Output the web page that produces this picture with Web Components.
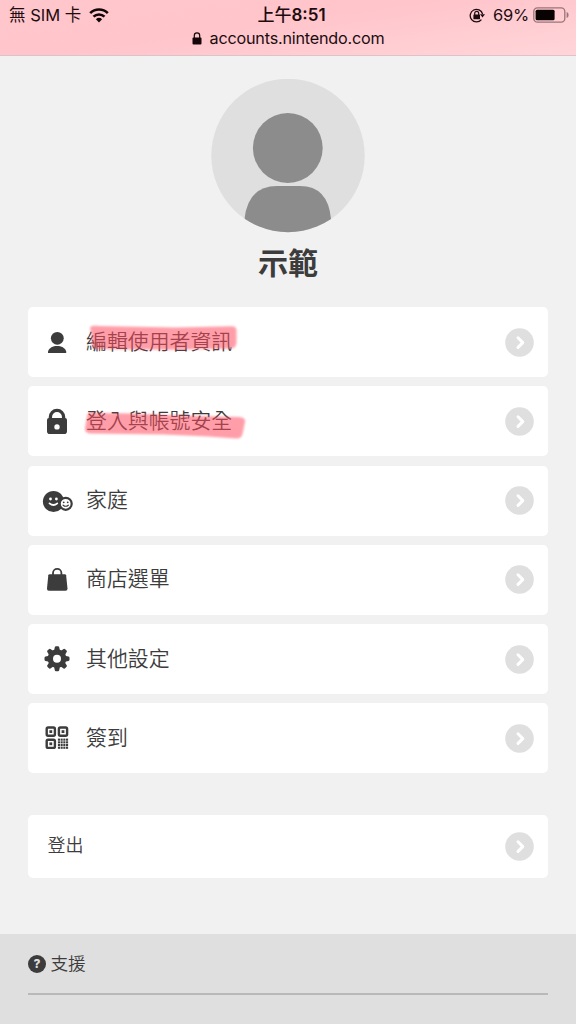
<!DOCTYPE html>
<html lang="zh-Hant">
<head>
<meta charset="utf-8">
<meta name="viewport" content="width=device-width">
<title>accounts.nintendo.com</title>
<style>
html,body{margin:0;height:100%;overflow:hidden;background:#f1f1f1}
body{font-family:Inter,"Noto Sans CJK TC",sans-serif;color:#3c3c3c}
</style>
</head>
<body>
<account-page></account-page>
<script>
function define(name, html, setup) {
  customElements.define(name, class extends HTMLElement {
    constructor() {
      super();
      const t = document.createElement('template');
      t.innerHTML = html;
      this.attachShadow({mode: 'open'}).append(t.content.cloneNode(true));
    }
    connectedCallback() { if (setup) setup(this, this.shadowRoot); }
  });
}

define('status-bar', `
<style>
:host{display:block;box-sizing:border-box;height:56px;padding-top:4px;color:#1c0c10;border-bottom:1px solid #dcc3c7;
 background:linear-gradient(172deg,#ffc6cb 0%,#ffc5cb 45%,#ffd5d9 100%)}
.row{display:grid;grid-template-columns:1fr auto 1fr;align-items:center;height:22px;padding:0 7px 0 9px;font-size:16.5px;line-height:22px}
.side{display:flex;align-items:center}
.right{justify-content:flex-end}
.time{font-weight:600;font-size:17px;margin-left:5px}
.time span{font-weight:500}
svg{display:block;flex:none}
.wifi{margin-left:8px}
.lockr{margin-right:8px}
.pct{letter-spacing:-.25px}
.bat{margin-left:4px}
.url{display:flex;justify-content:center;align-items:center;height:24px;font-size:16.2px;line-height:22px;letter-spacing:-.22px}
.url svg{margin-right:8px}
.url span{position:relative;top:-.5px}
</style>
<div class="row">
 <div class="side"><span>無 SIM 卡</span>
  <svg class="wifi" width="20" height="15" viewBox="0 0 20 15"><g fill="none" stroke="#100508" stroke-width="2.6"><path d="M1.2 5.2A12.4 12.4 0 0 1 18.8 5.2"/><path d="M4.5 8.7A7.8 7.8 0 0 1 15.5 8.7"/></g><path d="M6.9 11.2A4.5 4.5 0 0 1 13.1 11.2L10 14.4Z" fill="#100508"/></svg></div>
 <span class="time"><span>上午</span>8:51</span>
 <div class="side right">
  <svg class="lockr" width="16" height="15" viewBox="0 0 16 15"><path d="M12.4 11.6A6.3 6.3 0 1 1 13.6 6" fill="none" stroke="#1c0c10" stroke-width="1.3"/><path d="M11 6.2h5l-2.5 3.4z" fill="#1c0c10"/><rect x="4.4" y="6.5" width="6.6" height="4.8" rx=".6" fill="#1c0c10"/><path d="M5.7 7V5.4a2 2 0 0 1 4 0V7" fill="none" stroke="#1c0c10" stroke-width="1.2"/></svg>
  <span class="pct">69%</span>
  <svg class="bat" width="36" height="16" viewBox="0 0 36 16"><rect x=".8" y=".8" width="31" height="14.4" rx="3.6" fill="none" stroke="#9b747a" stroke-width="1.3"/><rect x="2.6" y="2.7" width="19" height="10.6" rx="1.5" fill="#080203"/><path d="M33.6 5q2 .7 2 3t-2 3z" fill="#9b747a"/></svg>
 </div>
</div>
<div class="url"><svg width="10" height="13" viewBox="0 0 10 13"><rect x=".5" y="5.5" width="9" height="7" rx="1" fill="#150609"/><path d="M2.3 6V3.6a2.7 2.7 0 0 1 5.4 0V6" fill="none" stroke="#150609" stroke-width="1.2"/></svg><span>accounts.nintendo.com</span></div>`);

define('user-profile', `
<style>
:host{display:flex;flex-direction:column;align-items:center;padding-top:23px;height:228px}
svg{display:block}
h1{margin:7.5px 0 0;font:700 30px/40px "Noto Sans CJK TC",sans-serif;color:#3c3c3c}
</style>
<svg width="154" height="154" viewBox="0 0 154 154"><defs><clipPath id="c"><circle cx="77" cy="76.5" r="76.7"/></clipPath></defs><circle cx="77" cy="76.5" r="76.7" fill="#dfdfdf"/><g clip-path="url(#c)" fill="#8c8c8c"><circle cx="76.8" cy="69" r="34.9"/><path d="M33.5 154V140Q37 107 66 107H89Q117 107 120 140V154Z"/></g></svg>
<h1><slot></slot></h1>`);

define('next-arrow', `
<style>:host{display:block;flex:none;width:29px;height:29px}svg{display:block}</style>
<svg width="29" height="29" viewBox="0 0 29 29"><circle cx="14.5" cy="14.5" r="14.3" fill="#dfdfdf"/><path d="M13 9.8l4.8 4.8-4.8 4.8" fill="none" stroke="#fff" stroke-width="3" stroke-linecap="round" stroke-linejoin="round"/></svg>`);

const dots = [0,1,2,3].map(r => [0,1,2,3].map(c =>
  `<rect x="${(16.9+c*2.7).toFixed(1)}" y="${(16.6+r*2.7).toFixed(1)}" width="2.1" height="2.1"/>`).join('')).join('');
const finder = (x, y) => `<rect x="${x+1.2}" y="${y+1.2}" width="8.2" height="8.2" rx="1.4" fill="none" stroke="#3c3c3c" stroke-width="2.4"/><rect x="${x+3.9}" y="${y+3.9}" width="2.8" height="2.8"/>`;
const teeth = [0,45,90,135,180,225,270,315].map(a =>
  `<path d="M13 8L13.8 4.2Q14 3.2 15 3.2H17Q18 3.2 18.2 4.2L19 8Z" transform="rotate(${a} 16 15.7)"/>`).join('');
const icons = {
  person: '<circle cx="16.3" cy="12.3" r="6.4"/><path d="M7 27V25.5C8 21.8 12 20 16.1 20S24.3 21.8 25.2 25.5V27Z"/>',
  lock: '<path d="M9.4 14V12a6.6 6.6 0 0 1 13.2 0V14" fill="none" stroke="#3c3c3c" stroke-width="3.3"/><path fill-rule="evenodd" d="M8 12.9H24Q26 12.9 26 14.9V26.2Q26 29 23.2 29H8.8Q6 29 6 26.2V14.9Q6 12.9 8 12.9ZM16 19.2a2.7 2.7 0 1 0 0 5.4a2.7 2.7 0 1 0 0-5.4Z"/>',
  family: '<circle cx="12.5" cy="16.5" r="10.6"/><g fill="#fff"><circle cx="9.5" cy="14" r="1.4"/><circle cx="15.4" cy="14" r="1.4"/></g><path d="M8.5 18.4Q12.4 21.7 16.3 18.4" fill="none" stroke="#fff" stroke-width="1.8" stroke-linecap="round"/><circle cx="24.7" cy="18.8" r="6" fill="#fff" stroke="#3c3c3c" stroke-width="2.2"/><circle cx="22.7" cy="17.3" r=".9"/><circle cx="26.7" cy="17.3" r=".9"/><path d="M22.1 20.2Q24.7 22.3 27.3 20.2" fill="none" stroke="#3c3c3c" stroke-width="1.2" stroke-linecap="round"/>',
  bag: '<path d="M12 11V9a4.2 4.2 0 0 1 8.4 0V11" fill="none" stroke="#3c3c3c" stroke-width="1.8"/><path d="M8.6 10.2H23.8Q24.9 10.2 25.1 11.3L26.5 24.6Q26.6 26.8 24.6 26.8H7.9Q5.8 26.8 6 24.6L7.3 11.3Q7.5 10.2 8.6 10.2Z"/>',
  gear: teeth + '<circle cx="16" cy="15.7" r="6.7" fill="none" stroke="#3c3c3c" stroke-width="5.4"/>',
  qr: finder(4.5, 4.3) + finder(16.7, 4.3) + finder(4.5, 16.5) + dots
};
/* Marker strokes that lie over a label, drawn relative to the card. */
const marks = {
  first: 'M62 21C63 18 67 19 72 19L147 20.6 203 19.2Q208.5 19 208.5 23L208.5 36Q208 41 203 41.6L140 42.8 72 42Q65 42 63.8 38L63.5 28Z',
  second: 'M59.5 28Q62 25 70 26.9L105 27.6 145 29.3 211 31Q218 31.5 217 36L214.6 47.5Q213.5 53 208 52.5L180 50.5 135 48.5 62 47.5Q56.5 47 57 42Z'
};

define('menu-card', `
<style>
:host{display:flex;align-items:center;position:relative;box-sizing:border-box;height:70px;padding:0 14px 0 13px;background:#fff;border-radius:5px}
:host([plain]){height:63.5px;padding-left:19.5px}
.icon{width:32px;height:32px;flex:none;fill:#3c3c3c}
.label{flex:1;margin-left:13px;font:350 20.9px/30px "Noto Sans CJK TC DemiLight","Noto Sans CJK TC",sans-serif;color:#3c3c3c;position:relative;top:-2.5px}
:host([plain]) .icon{display:none}
:host([plain]) .label{margin-left:0;font-size:18px;top:-2px}
.mark{position:absolute;left:0;top:0;width:240px;height:70px;overflow:visible;pointer-events:none}
.mark path{fill:#ff4a5d;opacity:.53;filter:blur(.8px)}
</style>
<svg class="icon" viewBox="0 0 32 32"></svg><span class="label"><slot></slot></span><next-arrow></next-arrow>`,
(el, root) => {
  root.querySelector('.icon').innerHTML = icons[el.getAttribute('icon')] || '';
  const m = marks[el.getAttribute('mark')];
  if (m) root.querySelector('next-arrow').insertAdjacentHTML('afterend', `<svg class="mark" viewBox="0 0 240 70"><path d="${m}"/></svg>`);
});

define('support-footer', `
<style>
:host{display:block;flex:1;background:#dfdfdf;padding:0 28px}
.row{display:flex;align-items:center;box-sizing:border-box;height:61.5px;border-bottom:2px solid #b9b9b9;font:350 17.6px/26px "Noto Sans CJK TC DemiLight","Noto Sans CJK TC",sans-serif;color:#3c3c3c}
.q{display:grid;place-items:center;width:18px;height:18px;border-radius:50%;background:#3c3c3c;color:#dfdfdf;font:800 12px/18px Inter,sans-serif;margin:2px 4.5px 0 0}
</style>
<div class="row"><span class="q">?</span><slot></slot></div>`);

define('account-page', `
<style>
:host{display:flex;flex-direction:column;height:1024px;background:#f1f1f1}
.menu{display:grid;gap:9.25px;margin:0 28px}
.exit{margin:41.3px 28px 55.5px}
status-bar,user-profile{flex:none}
</style>
<status-bar></status-bar>
<user-profile>示範</user-profile>
<nav class="menu">
<menu-card icon="person" mark="first">編輯使用者資訊</menu-card>
<menu-card icon="lock" mark="second">登入與帳號安全</menu-card>
<menu-card icon="family">家庭</menu-card>
<menu-card icon="bag">商店選單</menu-card>
<menu-card icon="gear">其他設定</menu-card>
<menu-card icon="qr">簽到</menu-card>
</nav>
<menu-card class="exit" plain>登出</menu-card>
<support-footer>支援</support-footer>`);
</script>
</body>
</html>
